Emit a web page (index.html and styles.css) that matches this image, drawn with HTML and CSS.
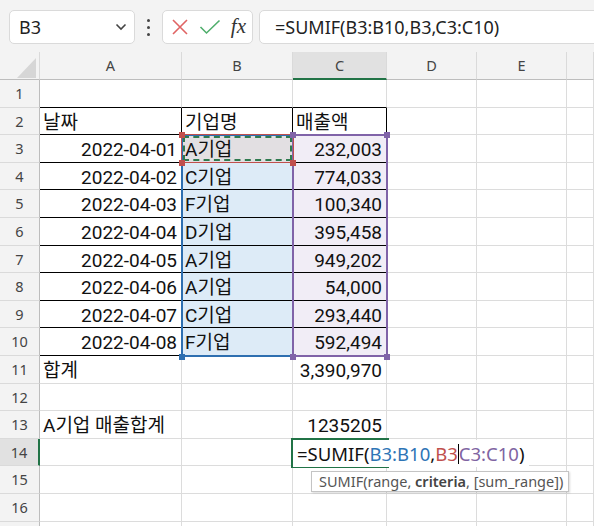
FILE: index.html
```html
<!DOCTYPE html>
<html lang="ko">
<head>
    <meta charset="UTF-8">
    <meta name="viewport" content="width=device-width, initial-scale=1.0">
    <title>SUMIF</title>
    <link rel="stylesheet" href="styles.css">
</head>
<body>
    <div class="toolbar">
        <div class="namebox">
            <span>B3</span>
            <svg class="chev" width="12" height="8" viewBox="0 0 12 8"><path d="M1.5 1.5 L6 6 L10.5 1.5" fill="none" stroke="#444" stroke-width="1.6"/></svg>
        </div>
        <div class="kebab"><i></i><i></i><i></i></div>
        <div class="btnbox">
            <svg width="18" height="18" viewBox="0 0 18 18"><path d="M2 2 L16 16 M16 2 L2 16" stroke="#e06464" stroke-width="1.6" fill="none"/></svg>
            <svg width="22" height="18" viewBox="0 0 22 18"><path d="M1.5 9 L7.5 15 L20.5 2.5" stroke="#4fae6c" stroke-width="1.6" fill="none"/></svg>
            <span class="fx">fx</span>
        </div>
        <div class="formula">=SUMIF(B3:B10,B3,C3:C10)</div>
    </div>

    <div class="sheet">
        <div class="corner"><svg width="40" height="28" viewBox="0 0 40 28"><polygon points="36,6 36,26 17,26" fill="#d6d6d6"/></svg></div>
        <div class="ch">A</div><div class="ch">B</div><div class="ch sel">C</div><div class="ch">D</div><div class="ch">E</div><div class="ch"></div>

        <div class="rh">1</div><div class="c top"></div><div class="c top"></div><div class="c top"></div><div class="c"></div><div class="c"></div><div class="c"></div>
        <div class="rh">2</div><div class="c t">날짜</div><div class="c t">기업명</div><div class="c t">매출액</div><div class="c"></div><div class="c"></div><div class="c"></div>
        <div class="rh">3</div><div class="c t r">2022-04-01</div><div class="c t ref">A기업</div><div class="c t r pu">232,003</div><div class="c"></div><div class="c"></div><div class="c"></div>
        <div class="rh">4</div><div class="c t r">2022-04-02</div><div class="c t bl">C기업</div><div class="c t r pu">774,033</div><div class="c"></div><div class="c"></div><div class="c"></div>
        <div class="rh">5</div><div class="c t r">2022-04-03</div><div class="c t bl">F기업</div><div class="c t r pu">100,340</div><div class="c"></div><div class="c"></div><div class="c"></div>
        <div class="rh">6</div><div class="c t r">2022-04-04</div><div class="c t bl">D기업</div><div class="c t r pu">395,458</div><div class="c"></div><div class="c"></div><div class="c"></div>
        <div class="rh">7</div><div class="c t r">2022-04-05</div><div class="c t bl">A기업</div><div class="c t r pu">949,202</div><div class="c"></div><div class="c"></div><div class="c"></div>
        <div class="rh">8</div><div class="c t r">2022-04-06</div><div class="c t bl">A기업</div><div class="c t r pu">54,000</div><div class="c"></div><div class="c"></div><div class="c"></div>
        <div class="rh">9</div><div class="c t r">2022-04-07</div><div class="c t bl">C기업</div><div class="c t r pu">293,440</div><div class="c"></div><div class="c"></div><div class="c"></div>
        <div class="rh">10</div><div class="c t r">2022-04-08</div><div class="c t bl">F기업</div><div class="c t r pu">592,494</div><div class="c"></div><div class="c"></div><div class="c"></div>
        <div class="rh">11</div><div class="c">합계</div><div class="c"></div><div class="c r">3,390,970</div><div class="c"></div><div class="c"></div><div class="c"></div>
        <div class="rh">12</div><div class="c"></div><div class="c"></div><div class="c"></div><div class="c"></div><div class="c"></div><div class="c"></div>
        <div class="rh">13</div><div class="c">A기업 매출합계</div><div class="c"></div><div class="c r">1235205</div><div class="c"></div><div class="c"></div><div class="c"></div>
        <div class="rh sel">14</div><div class="c"></div><div class="c"></div><div class="c"></div><div class="c"></div><div class="c"></div><div class="c"></div>
        <div class="rh">15</div><div class="c"></div><div class="c"></div><div class="c"></div><div class="c"></div><div class="c"></div><div class="c"></div>
        <div class="rh">16</div><div class="c"></div><div class="c"></div><div class="c"></div><div class="c"></div><div class="c"></div><div class="c"></div>
        <div class="rh"></div><div class="c"></div><div class="c"></div><div class="c"></div><div class="c"></div><div class="c"></div><div class="c"></div>

        <!-- reference highlights while editing C14 -->
        <div class="range blue-range"></div>
        <div class="range purple-range"></div>
        <div class="range red-range"><div class="ants"></div></div>
        <i class="sq blue" style="left:179px;top:302px"></i>
        <i class="sq red" style="left:179px;top:80px"></i>
        <i class="sq red" style="left:179px;top:108px"></i>
        <i class="sq red" style="left:290px;top:108px"></i>
        <i class="sq purple" style="left:290px;top:80px"></i>
        <i class="sq purple" style="left:384px;top:80px"></i>
        <i class="sq purple" style="left:290px;top:302px"></i>
        <i class="sq purple" style="left:384px;top:302px"></i>

        <div class="active"></div>
        <div class="editor">=SUMIF(<span class="rb">B3:B10</span>,<span class="rr">B3</span><span class="caret"></span><span class="rp">C3:C10</span>)</div>
        <div class="tip">SUMIF(range, <b>criteria</b>, [sum_range])</div>
    </div>
</body>
</html>
```

FILE: styles.css
```css
body {
    margin: 0;
    background: #f3f3f3;
    font-family: "Noto Sans", "Noto Sans CJK KR", sans-serif;
    overflow: hidden;
    height: 526px;
}
.toolbar {
    height: 52px;
    box-sizing: border-box;
    display: flex;
    align-items: flex-start;
    padding: 10px 0 0 9px;
}
.namebox, .btnbox, .formula {
    height: 34px;
    box-sizing: border-box;
    background: #fff;
    border: 1px solid #dadada;
    border-radius: 5px;
    display: flex;
    align-items: center;
}
.namebox {
    width: 126px;
    padding: 0 7px 0 9px;
    justify-content: space-between;
    font-size: 18px;
    color: #222;
}
.kebab {
    width: 27px;
    height: 34px;
    display: flex;
    flex-direction: column;
    align-items: center;
    justify-content: center;
    gap: 4px;
}
.kebab i {
    width: 3px;
    height: 3px;
    background: #444;
    border-radius: 50%;
}
.btnbox {
    width: 91px;
    padding: 0 6px 0 8px;
    justify-content: space-between;
}
.fx {
    font-family: "Liberation Serif", serif;
    font-style: italic;
    font-size: 21px;
    color: #333;
    margin-top: -2px;
}
.formula {
    flex: 1;
    margin-left: 6px;
    margin-right: -10px;
    padding-left: 15px;
    font-size: 18px;
    color: #222;
}

.sheet {
    position: relative;
    display: grid;
    grid-template-columns: 40px 142px 111px 94px 90px 90px 1fr;
    grid-template-rows: 28px repeat(17, 27.6px);
    background: #fff;
    font-family: Roboto, "Noto Sans CJK KR", sans-serif;
}
.corner, .ch {
    background: #f3f3f3;
    border-bottom: 1px solid #bdbdbd;
    box-sizing: border-box;
}
.corner {
    border-right: 1px solid #dadada;
}
.ch {
    border-right: 1px solid #dadada;
    font-family: "Noto Sans", sans-serif;
    font-size: 14.5px;
    color: #444;
    text-align: center;
    line-height: 27px;
}
.ch.sel {
    background: #e1e1e1;
    border-bottom: 2px solid #217346;
}
.rh {
    background: #f3f3f3;
    border-right: 1px solid #bdbdbd;
    border-bottom: 1px solid #dadada;
    box-sizing: border-box;
    font-family: "Noto Sans", sans-serif;
    font-size: 14.5px;
    color: #444;
    text-align: center;
    line-height: 27px;
}
.rh.sel {
    background: #e1e1e1;
    border-right: 2px solid #217346;
}
.c {
    box-sizing: border-box;
    border-right: 1px solid #dcdcdc;
    border-bottom: 1px solid #dcdcdc;
    font-size: 19px;
    line-height: 27.6px;
    color: #111;
    padding: 1px 4px 0 3px;
    white-space: nowrap;
}
.c.r { text-align: right; }
.c.top { border-bottom-color: #000; }
.c.t {
    border-right-color: #000;
    border-bottom-color: #000;
}
.c.bl { background: #ddebf7; }
.c.pu { background: #f1edf6; }
.c.ref { background: #e2dfe2; }

.range {
    position: absolute;
    box-sizing: border-box;
}
.blue-range {
    left: 181px;
    top: 82px;
    width: 113px;
    height: 223px;
    border: 2px solid #2e6fb0;
}
.purple-range {
    left: 292px;
    top: 82px;
    width: 96px;
    height: 223px;
    border: 2px solid #8063a8;
}
.red-range {
    left: 181px;
    top: 82px;
    width: 113px;
    height: 29px;
    border: 1px solid #c0504d;
}
.ants {
    position: absolute;
    inset: 1px;
    border: 2px dashed #2f7a4f;
}
.sq {
    position: absolute;
    width: 6px;
    height: 6px;
}
.sq.blue { background: #2e6fb0; }
.sq.red { background: #c0504d; }
.sq.purple { background: #8063a8; }

.active {
    position: absolute;
    left: 291px;
    top: 386px;
    width: 98px;
    height: 30px;
    box-sizing: border-box;
    border: 2px solid #217346;
    border-right: none;
}
.editor {
    position: absolute;
    left: 293px;
    top: 388px;
    width: 236px;
    height: 27px;
    background: #fff;
    font-family: "Noto Sans", sans-serif;
    font-size: 18.5px;
    line-height: 27px;
    padding-left: 4px;
    box-sizing: border-box;
    color: #111;
    white-space: nowrap;
}
.rb { color: #2e75b6; }
.rr { color: #c0504d; }
.rp { color: #8064a2; }
.caret {
    display: inline-block;
    width: 1px;
    height: 20px;
    background: #000;
    vertical-align: -3px;
}
.tip {
    position: absolute;
    left: 311px;
    top: 419px;
    width: 258px;
    height: 21px;
    box-sizing: border-box;
    background: #fff;
    border: 1px solid #c4c4c4;
    box-shadow: 1px 1px 2px rgba(0, 0, 0, 0.15);
    font-family: "Noto Sans", sans-serif;
    font-size: 14.5px;
    line-height: 19px;
    color: #555;
    padding-left: 7px;
    white-space: nowrap;
}
.tip b { font-weight: 600; color: #444; }
```
